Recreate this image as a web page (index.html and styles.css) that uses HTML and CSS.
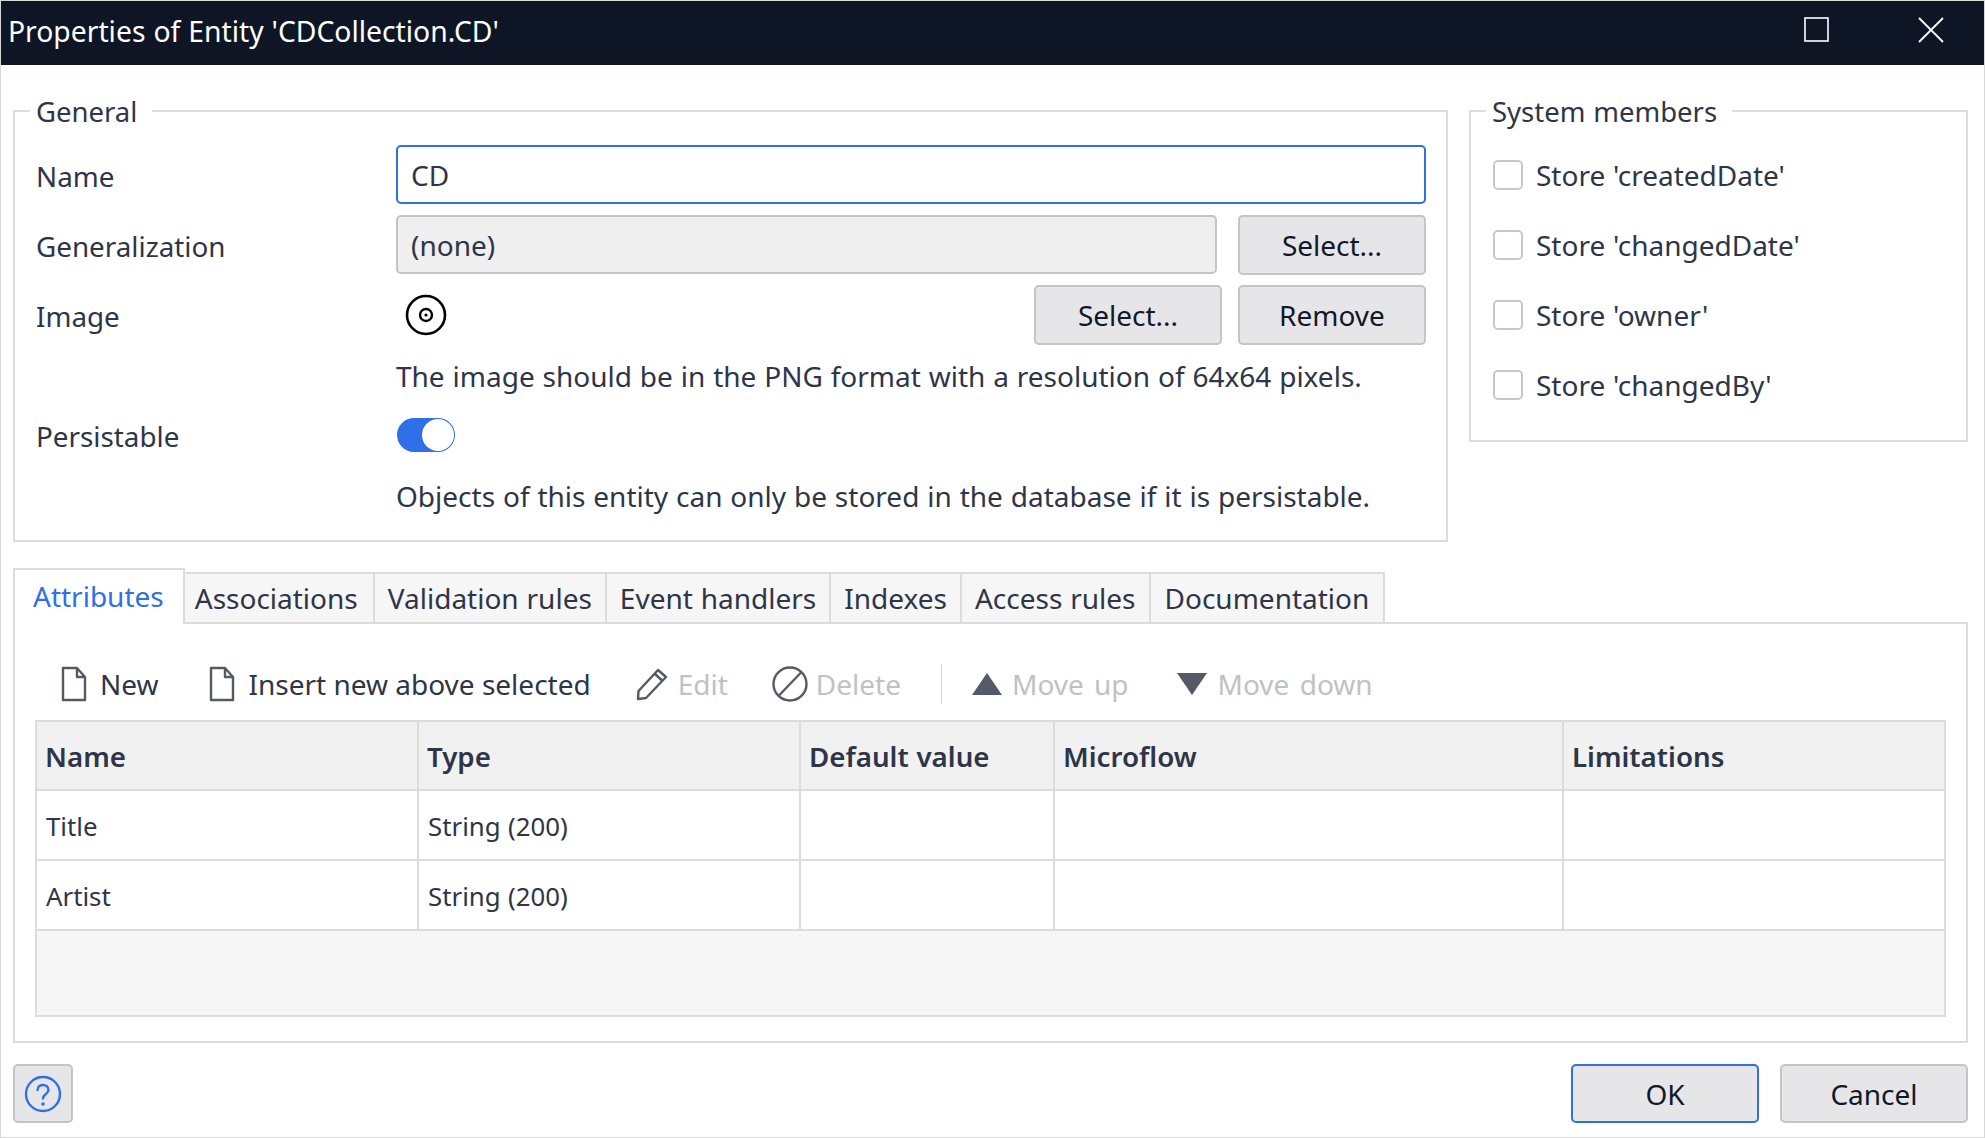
FILE: index.html
```html
<!DOCTYPE html>
<html lang="en">
<head>
<meta charset="utf-8">
<title>Properties of Entity</title>
<link rel="stylesheet" href="styles.css">
</head>
<body>
<div class="window">
  <header class="titlebar">
    <span class="title">Properties of Entity 'CDCollection.CD'</span>
    <div class="winctl">
      <svg class="maxi" width="25" height="25" viewBox="0 0 25 25"><rect x="1" y="1" width="23" height="23" fill="none" stroke="#fff" stroke-width="1.6"/></svg>
      <svg class="close" width="26" height="26" viewBox="0 0 26 26"><path d="M1 1 L25 25 M25 1 L1 25" fill="none" stroke="#fff" stroke-width="1.8"/></svg>
    </div>
  </header>
  <main class="content">
    <div class="top">
      <fieldset class="group general">
        <legend>General</legend>
        <div class="form">
          <label class="lbl">Name</label>
          <div class="field"><div class="input focus">CD</div></div>
          <label class="lbl">Generalization</label>
          <div class="field"><div class="input disabled">(none)</div><button class="btn">Select...</button></div>
          <label class="lbl">Image</label>
          <div class="field img-field">
            <svg class="cd" width="42" height="42" viewBox="0 0 42 42"><circle cx="21" cy="21" r="19" fill="none" stroke="#000" stroke-width="2.6"/><circle cx="21" cy="21" r="6" fill="none" stroke="#000" stroke-width="2.4"/><circle cx="21" cy="21" r="1.6" fill="#000"/></svg>
            <button class="btn push">Select...</button><button class="btn">Remove</button>
          </div>
          <div class="spacer"></div>
          <div class="hint first">The image should be in the PNG format with a resolution of 64x64 pixels.</div>
          <label class="lbl">Persistable</label>
          <div class="field"><div class="toggle"><span class="knob"></span></div></div>
          <div class="spacer"></div>
          <div class="hint">Objects of this entity can only be stored in the database if it is persistable.</div>
        </div>
      </fieldset>
      <fieldset class="group system">
        <legend>System members</legend>
        <div class="checks">
          <div class="check"><span class="box"></span>Store 'createdDate'</div>
          <div class="check"><span class="box"></span>Store 'changedDate'</div>
          <div class="check"><span class="box"></span>Store 'owner'</div>
          <div class="check"><span class="box"></span>Store 'changedBy'</div>
        </div>
      </fieldset>
    </div>
    <nav class="tabs">
      <div class="tab active">Attributes</div>
      <div class="tab second">Associations</div>
      <div class="tab">Validation rules</div>
      <div class="tab">Event handlers</div>
      <div class="tab">Indexes</div>
      <div class="tab">Access rules</div>
      <div class="tab last">Documentation</div>
    </nav>
    <section class="panel">
      <div class="toolbar">
        <div class="tool"><svg width="26" height="36" viewBox="0 0 26 36"><path d="M2 2 H16 L24 11 V34 H2 Z M16 2 V11 H24" fill="none" stroke="#555a68" stroke-width="2.4" stroke-linejoin="round"/></svg>New</div>
        <div class="tool t2"><svg width="26" height="36" viewBox="0 0 26 36"><path d="M2 2 H16 L24 11 V34 H2 Z M16 2 V11 H24" fill="none" stroke="#555a68" stroke-width="2.4" stroke-linejoin="round"/></svg>Insert new above selected</div>
        <div class="tool off t3"><svg width="32" height="33" viewBox="0 0 32 33"><path d="M2 31 L2.500 23 L22 2 L30 9 L10 30 Z M18.500 5.500 L26.500 13" fill="none" stroke="#555a68" stroke-width="2.400" stroke-linejoin="round"/></svg>Edit</div>
        <div class="tool off t4"><svg width="36" height="36" viewBox="0 0 36 36"><circle cx="18" cy="18" r="16.500" fill="none" stroke="#555a68" stroke-width="2.400"/><path d="M6.500 30 L29.500 6" fill="none" stroke="#555a68" stroke-width="2.400"/></svg>Delete</div>
        <span class="sep"></span>
        <div class="tool off t6"><svg width="30" height="22" viewBox="0 0 30 22"><path d="M15 0 L30 22 H0 Z" fill="#555a68"/></svg>Move up</div>
        <div class="tool off t7"><svg width="30" height="22" viewBox="0 0 30 22"><path d="M0 0 H30 L15 22 Z" fill="#555a68"/></svg>Move down</div>
      </div>
      <table class="grid">
        <colgroup><col class="c1"><col class="c2"><col class="c3"><col class="c4"><col class="c5"></colgroup>
        <thead><tr><th>Name</th><th>Type</th><th>Default value</th><th>Microflow</th><th>Limitations</th></tr></thead>
        <tbody>
          <tr><td>Title</td><td>String (200)</td><td></td><td></td><td></td></tr>
          <tr><td>Artist</td><td>String (200)</td><td></td><td></td><td></td></tr>
          <tr class="filler"><td colspan="5"></td></tr>
        </tbody>
      </table>
    </section>
    <footer class="footer">
      <button class="btn help"><svg width="38" height="38" viewBox="0 0 38 38"><circle cx="19" cy="19" r="17" fill="none" stroke="#2f6fe8" stroke-width="2.400"/><path d="M13.500 15 C13.500 8 24.500 8.500 24.500 15 C24.500 19 19 19 19 23.500" fill="none" stroke="#2f6fe8" stroke-width="2.400" stroke-linecap="round"/><circle cx="19" cy="29" r="1.800" fill="#2f6fe8"/></svg></button>
      <button class="btn ok">OK</button>
      <button class="btn cancel">Cancel</button>
    </footer>
  </main>
</div>
</body>
</html>
```
FILE: styles.css
```css
* { box-sizing: border-box; }
html, body { margin: 0; padding: 0; background: #fff; }
body {
  font-family: "Noto Sans", "Open Sans", sans-serif;
  font-size: 28px;
  word-spacing: 0.6px;
  color: #2e3548;
}
.window {
  width: 1985px;
  height: 1138px;
  border: 1px solid #d8d8d8;
  display: flex;
  flex-direction: column;
  overflow: hidden;
}
.titlebar {
  height: 64px;
  background: #0e1626;
  color: #fff;
  display: flex;
  align-items: center;
  justify-content: space-between;
  padding: 0 40px 5px 7px;
  font-size: 28.3px;
}
.winctl { display: flex; align-items: center; gap: 89px; margin-bottom: 2px; }
.content { flex: 1; padding: 28px 16px 0 12px; display: flex; flex-direction: column; }
.top { display: flex; gap: 21px; align-items: flex-start; }
.group { margin: 0; border: 2px solid #dcdcdc; min-width: 0; }
.group legend { margin-left: -6px; padding: 2px 15px 0 6px; line-height: 34px; height: 36px; font-size: 27.5px; }
.general { width: 1435px; height: 449px; padding: 16px 20px 0 21px; }
.system { width: 499px; height: 349px; padding: 0 21px; }
.form { display: grid; grid-template-columns: 360px 1fr; grid-template-rows: 59px 59px 59px 44px 50px 50px; row-gap: 11px; }
.lbl { display: flex; align-items: center; padding-top: 2px; font-size: 27.8px; }
.field { display: flex; align-items: center; gap: 21px; }
.img-field { gap: 16px; }
.input {
  flex: 1;
  height: 59px;
  padding: 0 13px;
  line-height: 57px;
  border: 2px solid #c4c4c8;
  border-radius: 5px;
}
.input.focus { border-color: #2f6fe8; }
.input.disabled { background: #efefef; }
.btn {
  font: inherit;
  word-spacing: inherit;
  color: #10182a;
  width: 188px;
  height: 60px;
  padding: 0;
  background: #e6e6e9;
  border: 2px solid #c4c4c8;
  border-radius: 5px;
}
.cd { margin-left: 9px; }
.push { margin-left: auto; }
.hint { display: flex; align-items: center; }
.hint.first { padding-bottom: 2px; }
.toggle {
  margin-left: 1px;
  width: 58px;
  height: 34px;
  border-radius: 17px;
  background: #2f6fe8;
  position: relative;
}
.knob {
  position: absolute;
  right: 1px;
  top: 1px;
  width: 32px;
  height: 32px;
  border-radius: 50%;
  background: #fff;
}
.checks { display: flex; flex-direction: column; gap: 10px; padding-top: 16px; }
.check { height: 60px; display: flex; align-items: center; gap: 13px; }
.box {
  width: 30px;
  height: 30px;
  margin-left: 1px;
  border: 2px solid #c8c8cc;
  border-radius: 5px;
  background: #fff;
}
.tabs { display: flex; align-items: flex-end; margin: 26px 0 -2px 0; position: relative; z-index: 1; }
.tab {
  height: 52px;
  padding: 0 13px;
  display: flex;
  align-items: center;
  background: #f6f6f6;
  border: 2px solid #dcdcdc;
  border-left-width: 0;
}
.tab.second { padding: 0 15px 0 10px; }
.tab.last { padding: 0 14px; }
.tab.active {
  height: 56px;
  background: #fff;
  color: #2f6fe8;
  border-left-width: 2px;
  border-bottom: 0;
  padding: 0 19px 3px 18px;
}
.panel {
  width: 1955px;
  height: 421px;
  border: 2px solid #dcdcdc;
  padding: 0 20px;
}
.toolbar { height: 96px; display: flex; align-items: center; padding: 24px 0 0 26px; gap: 48px; color: #2e3548; }
.tool { display: flex; align-items: center; gap: 13px; }
.tool.off { color: #bfc1c6; gap: 10px; }
.sep { width: 1px; height: 40px; background: #d4d4d4; margin-left: -8px; }
.t2 { margin-left: 2px; gap: 14px; word-spacing: 0; }
.t3 { margin-left: -3px; }
.tool.t4 { margin-left: -4px; gap: 8px; }
.t6 { margin-left: -18px; word-spacing: 3px; }
.tool.t7 { margin-left: 0; gap: 11px; word-spacing: 3px; }
.grid { width: 1909px; table-layout: fixed; border-collapse: collapse; }
.c1, .c2, .c5 { width: 382px; }
.c3 { width: 254px; }
.c4 { width: 509px; }
.grid th, .grid td { border: 2px solid #dcdcdc; padding: 1px 9px 0; height: 70px; text-align: left; }
.grid th { background: #f1f1f1; font-weight: 600; font-size: 27.7px; height: 69px; padding: 0 8px; }
.grid td { font-size: 25.8px; }
.grid .filler td { height: 86px; background: #f6f6f6; }
.footer { display: flex; align-items: center; gap: 21px; margin-top: 21px; }
.footer .btn { height: 59px; }
.footer .help { width: 60px; display: flex; align-items: center; justify-content: center; margin-right: auto; }
.ok { border-color: #2f6fe8; }
```
